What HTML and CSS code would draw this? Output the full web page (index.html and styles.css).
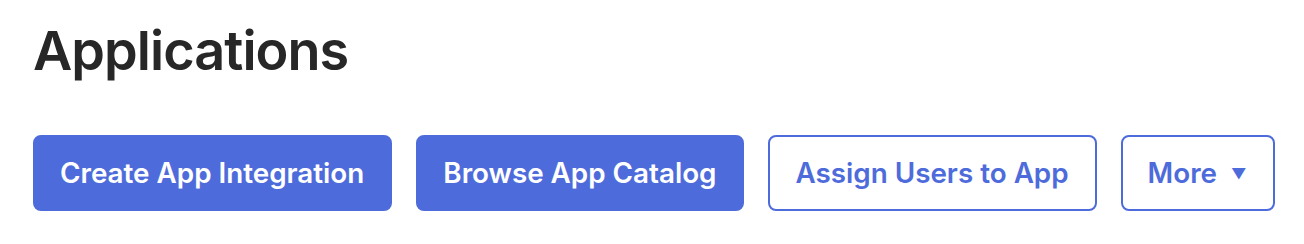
FILE: index.html
```html
<!DOCTYPE html>
<html>
<head>
<meta charset="utf-8">
<link rel="stylesheet" href="styles.css">
</head>
<body>
<div class="page">
  <h1 class="title">Applications</h1>
  <div class="actions">
    <button class="btn btn-primary">Create App Integration</button>
    <button class="btn btn-primary">Browse App Catalog</button>
    <button class="btn btn-secondary">Assign Users to App</button>
    <button class="btn btn-secondary btn-more">More <span class="caret">▼</span></button>
  </div>
</div>
</body>
</html>
```
FILE: styles.css
```css
html, body {
  margin: 0;
  padding: 0;
  background: #ffffff;
}
.page {
  padding: 18px 33px 0 33px;
  font-family: Inter, "Noto Sans", sans-serif;
}
.title {
  margin: 0;
  font-size: 54px;
  font-weight: 600;
  color: #272727;
  letter-spacing: -0.95px;
  line-height: 66px;
}
.actions {
  display: flex;
  gap: 24px;
  margin-top: 51px;
}
.btn {
  height: 76px;
  box-sizing: border-box;
  border-radius: 8px;
  font-family: Inter, "Noto Sans", sans-serif;
  font-size: 27.8px;
  font-weight: 600;
  padding: 0 26px 0 25px;
  cursor: pointer;
  display: flex;
  align-items: center;
  white-space: nowrap;
  flex-shrink: 0;
}
.btn-primary {
  background: #4e6bdb;
  border: 2px solid #4e6bdb;
  color: #ffffff;
}
.btn-secondary {
  background: #ffffff;
  border: 2px solid #4e6bdb;
  color: #4e6bdb;
}
.caret {
  font-size: 15px;
  margin-left: 14px;
}
```
